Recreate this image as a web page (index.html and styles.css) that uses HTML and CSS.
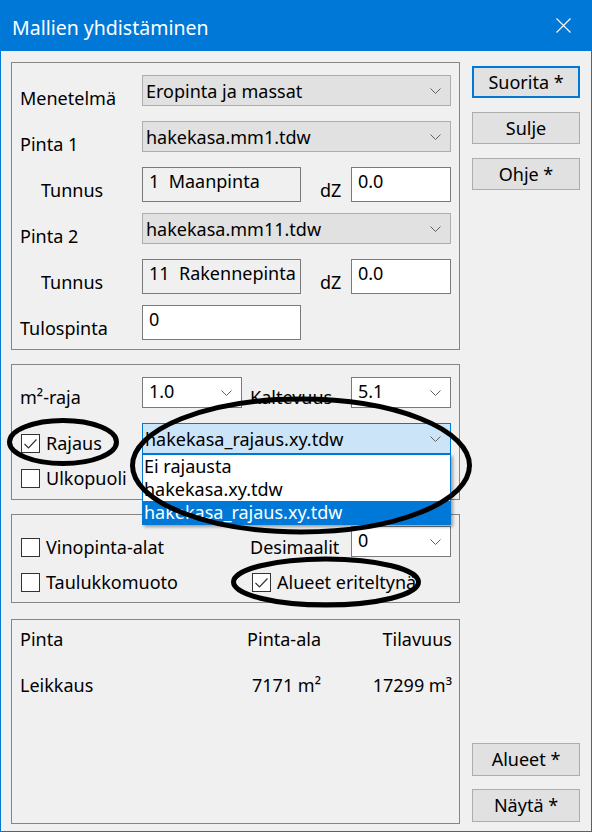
FILE: index.html
```html
<!DOCTYPE html>
<html lang="fi">
<head>
<meta charset="utf-8">
<title>Mallien yhdistäminen</title>
<link rel="stylesheet" href="styles.css">
</head>
<body>
<div class="window">
  <div class="titlebar">
    <span class="title">Mallien yhdistäminen</span>
    <svg class="close" width="15" height="15" viewBox="0 0 15 15"><path d="M0.5 0.5L14.5 14.5M14.5 0.5L0.5 14.5" stroke="#fff" stroke-width="1.1" fill="none"/></svg>
  </div>
  <div class="content">
    <div class="left">
      <div class="group g1">
        <div class="row h46">
          <div class="lbl">Menetelmä</div>
          <div class="combo w309"><span>Eropinta ja massat</span><svg class="chev" width="11" height="6" viewBox="0 0 11 6"><path d="M0.5 0.5L5.5 5.5L10.5 0.5" fill="none" stroke="#606060" stroke-width="1"/></svg></div>
        </div>
        <div class="row h46">
          <div class="lbl">Pinta 1</div>
          <div class="combo w309"><span>hakekasa.mm1.tdw</span><svg class="chev" width="11" height="6" viewBox="0 0 11 6"><path d="M0.5 0.5L5.5 5.5L10.5 0.5" fill="none" stroke="#606060" stroke-width="1"/></svg></div>
        </div>
        <div class="row h46">
          <div class="lbl indent">Tunnus</div>
          <div class="edit readonly w159">1  Maanpinta</div>
          <div class="lbl dz">dZ</div>
          <div class="edit w100">0.0</div>
        </div>
        <div class="row h46">
          <div class="lbl">Pinta 2</div>
          <div class="combo w309"><span>hakekasa.mm11.tdw</span><svg class="chev" width="11" height="6" viewBox="0 0 11 6"><path d="M0.5 0.5L5.5 5.5L10.5 0.5" fill="none" stroke="#606060" stroke-width="1"/></svg></div>
        </div>
        <div class="row h46">
          <div class="lbl indent">Tunnus</div>
          <div class="edit readonly w159">11  Rakennepinta</div>
          <div class="lbl dz">dZ</div>
          <div class="edit w100">0.0</div>
        </div>
        <div class="row h35">
          <div class="lbl">Tulospinta</div>
          <div class="edit w159">0</div>
        </div>
      </div>

      <div class="group g2">
        <div class="row h31">
          <div class="lbl lbl-short">m²-raja</div>
          <div class="combo editable w100"><span>1.0</span><svg class="chev" width="11" height="6" viewBox="0 0 11 6"><path d="M0.5 0.5L5.5 5.5L10.5 0.5" fill="none" stroke="#606060" stroke-width="1"/></svg></div>
          <div class="lbl lbl2 lbl-short">Kaltevuus</div>
          <div class="combo editable w100"><span>5.1</span><svg class="chev" width="11" height="6" viewBox="0 0 11 6"><path d="M0.5 0.5L5.5 5.5L10.5 0.5" fill="none" stroke="#606060" stroke-width="1"/></svg></div>
        </div>
        <div class="row h31 rowb">
          <div class="check w130 mt8"><span class="cb"><svg width="17" height="17" viewBox="0 0 17 17"><path d="M2.5 9L6.5 13L14.5 4.5" fill="none" stroke="#333" stroke-width="1.2"/></svg></span><span>Rajaus</span></div>
          <div class="combo open w309">
            <span>hakekasa_rajaus.xy.tdw</span><svg class="chev" width="11" height="6" viewBox="0 0 11 6"><path d="M0.5 0.5L5.5 5.5L10.5 0.5" fill="none" stroke="#606060" stroke-width="1"/></svg>
            <ul class="list">
              <li>Ei rajausta</li>
              <li>hakekasa.xy.tdw</li>
              <li class="sel">hakekasa_rajaus.xy.tdw</li>
            </ul>
          </div>
        </div>
        <div class="row h24 rowc">
          <div class="check w130"><span class="cb"></span><span>Ulkopuoli</span></div>
        </div>
      </div>

      <div class="group g3">
        <div class="row h31">
          <div class="check w230 mt9"><span class="cb"></span><span>Vinopinta-alat</span></div>
          <div class="lbl lbl2 mt9">Desimaalit</div>
          <div class="combo editable w100"><span>0</span><svg class="chev" width="11" height="6" viewBox="0 0 11 6"><path d="M0.5 0.5L5.5 5.5L10.5 0.5" fill="none" stroke="#606060" stroke-width="1"/></svg></div>
        </div>
        <div class="row h24 rowe">
          <div class="check w230"><span class="cb"></span><span>Taulukkomuoto</span></div>
          <div class="check right-check"><span class="cb"><svg width="17" height="17" viewBox="0 0 17 17"><path d="M2.5 9L6.5 13L14.5 4.5" fill="none" stroke="#333" stroke-width="1.2"/></svg></span><span>Alueet eriteltynä</span></div>
        </div>
      </div>

      <div class="group g4">
        <div class="trow"><span>Pinta</span><span class="num">Pinta-ala</span><span class="num">Tilavuus</span></div>
        <div class="trow second"><span>Leikkaus</span><span class="num">7171 m²</span><span class="num">17299 m³</span></div>
      </div>
    </div>

    <div class="right">
      <div class="btn default first">Suorita *</div>
      <div class="btn">Sulje</div>
      <div class="btn">Ohje *</div>
      <div class="btn bottom">Alueet *</div>
      <div class="btn">Näytä *</div>
    </div>
  </div>

  <svg class="marks" width="592" height="832" viewBox="0 0 592 832">
    <ellipse cx="63" cy="442" rx="53.5" ry="21.5"/>
    <ellipse cx="301" cy="465.5" rx="168.5" ry="66.5"/>
    <ellipse cx="326" cy="582" rx="92.5" ry="23"/>
  </svg>
</div>
</body>
</html>
```

FILE: styles.css
```css
* { box-sizing: border-box; }
html, body { margin: 0; padding: 0; }
body {
  font-family: "Noto Sans", "Segoe UI", sans-serif;
  font-size: 18px;
  line-height: 24px;
  color: #000;
  background: #fff;
}
.window {
  position: relative;
  width: 592px;
  height: 832px;
  display: flex;
  flex-direction: column;
}
.titlebar {
  height: 51px;
  flex: none;
  background: #0078d7;
  color: #fff;
  display: flex;
  align-items: center;
  justify-content: space-between;
}
.title {
  font-size: 19.5px;
  line-height: 24px;
  padding-left: 12px;
  padding-top: 4px;
}
.close { margin-right: 21px; }
.content {
  flex: 1;
  display: flex;
  background: #f0f0f0;
  border: 1px solid #0078d7;
  border-top: none;
  padding: 11px 11px 0 10px;
}
.left {
  width: 449px;
  flex: none;
  display: flex;
  flex-direction: column;
  padding-bottom: 7px;
}
.right {
  width: 108px;
  flex: none;
  margin-left: 12px;
  display: flex;
  flex-direction: column;
  padding-bottom: 9px;
}

/* groups */
.group { border: 1px solid #858585; flex: none; }
.g1 { padding: 12px 0 9px 0; }
.g2 { margin-top: 14px; padding: 12px 0 9px 0; }
.g3 { margin-top: 14px; padding: 11px 0 8px 0; }
.g4 { margin-top: 16px; flex: 1; padding: 7px 7px 0 8px; }

.row { display: flex; align-items: flex-start; }
.h46 { height: 46px; }
.h35 { height: 35px; }
.h31 { height: 31px; }
.h24 { height: 24px; }
.rowb { margin-top: 15px; }
.rowc { margin-top: 12px; }
.rowe { margin-top: 13px; }

.lbl {
  width: 130px;
  flex: none;
  padding-left: 8px;
  margin-top: 11px;
  white-space: nowrap;
}
.lbl.indent { padding-left: 29px; }
.lbl.dz { width: 50px; padding-left: 19px; }
.lbl-short { margin-top: 8px; }
.lbl2 { width: 109px; padding-left: 8px; }
.mt8 { margin-top: 8px; }
.mt9 { margin-top: 9px; }

/* controls */
.w309 { width: 309px; }
.w159 { width: 159px; }
.w100 { width: 100px; }
.w130 { width: 130px; }
.w230 { width: 230px; }

.combo {
  flex: none;
  height: 31px;
  background: #e1e1e1;
  border: 1px solid #adadad;
  display: flex;
  align-items: center;
  justify-content: space-between;
  padding-left: 3px;
  padding-right: 9px;
  white-space: nowrap;
}
.combo.editable {
  background: #fff;
  border-color: #7a7a7a;
  align-items: flex-start;
  padding-top: 1px;
  padding-left: 6px;
}
.combo.editable .chev { align-self: center; margin-top: -1px; }
.combo.open {
  position: relative;
  background: #cce4f7;
  border-color: #0078d7;
  padding-left: 2px;
}
.list {
  position: absolute;
  z-index: 5;
  left: -1px;
  top: 30px;
  width: 309px;
  margin: 0;
  padding: 0;
  list-style: none;
  background: #fff;
  border: 1px solid #0078d7;
  box-shadow: 2px 2px 3px rgba(0, 0, 0, 0.35);
}
.list li {
  height: 23px;
  line-height: 23px;
  padding-left: 1px;
}
.list li.sel { background: #0078d7; color: #fff; }

.edit {
  flex: none;
  height: 35px;
  background: #fff;
  border: 1px solid #7a7a7a;
  padding: 1px 6px 0 6px;
  white-space: pre;
}
.edit.readonly { background: #f0f0f0; }

.check {
  flex: none;
  height: 24px;
  display: flex;
  align-items: center;
  padding-left: 9px;
  white-space: nowrap;
}
.right-check { padding-left: 10px; }
.cb {
  width: 19px;
  height: 19px;
  flex: none;
  border: 1px solid #333;
  background: #fff;
  margin-right: 6px;
  display: flex;
}

/* results table */
.trow {
  display: grid;
  grid-template-columns: 1fr 110px 131px;
}
.trow.second { margin-top: 22px; }
.num { text-align: right; }

/* buttons */
.btn {
  flex: none;
  height: 32px;
  background: #e1e1e1;
  border: 1px solid #adadad;
  text-align: center;
  line-height: 24px;
  padding-top: 3px;
  margin-top: 14px;
  white-space: nowrap;
}
.btn.first { margin-top: 4px; }
.btn.default { border: 2px solid #0078d7; padding-top: 2px; }
.btn.bottom { margin-top: auto; height: 33px; }
.btn:last-child { height: 33px; margin-top: 13px; }

/* hand-drawn annotation ellipses */
.marks {
  position: absolute;
  left: 0;
  top: 0;
  z-index: 10;
  pointer-events: none;
}
.marks ellipse { fill: none; stroke: #000; stroke-width: 5; }
```
